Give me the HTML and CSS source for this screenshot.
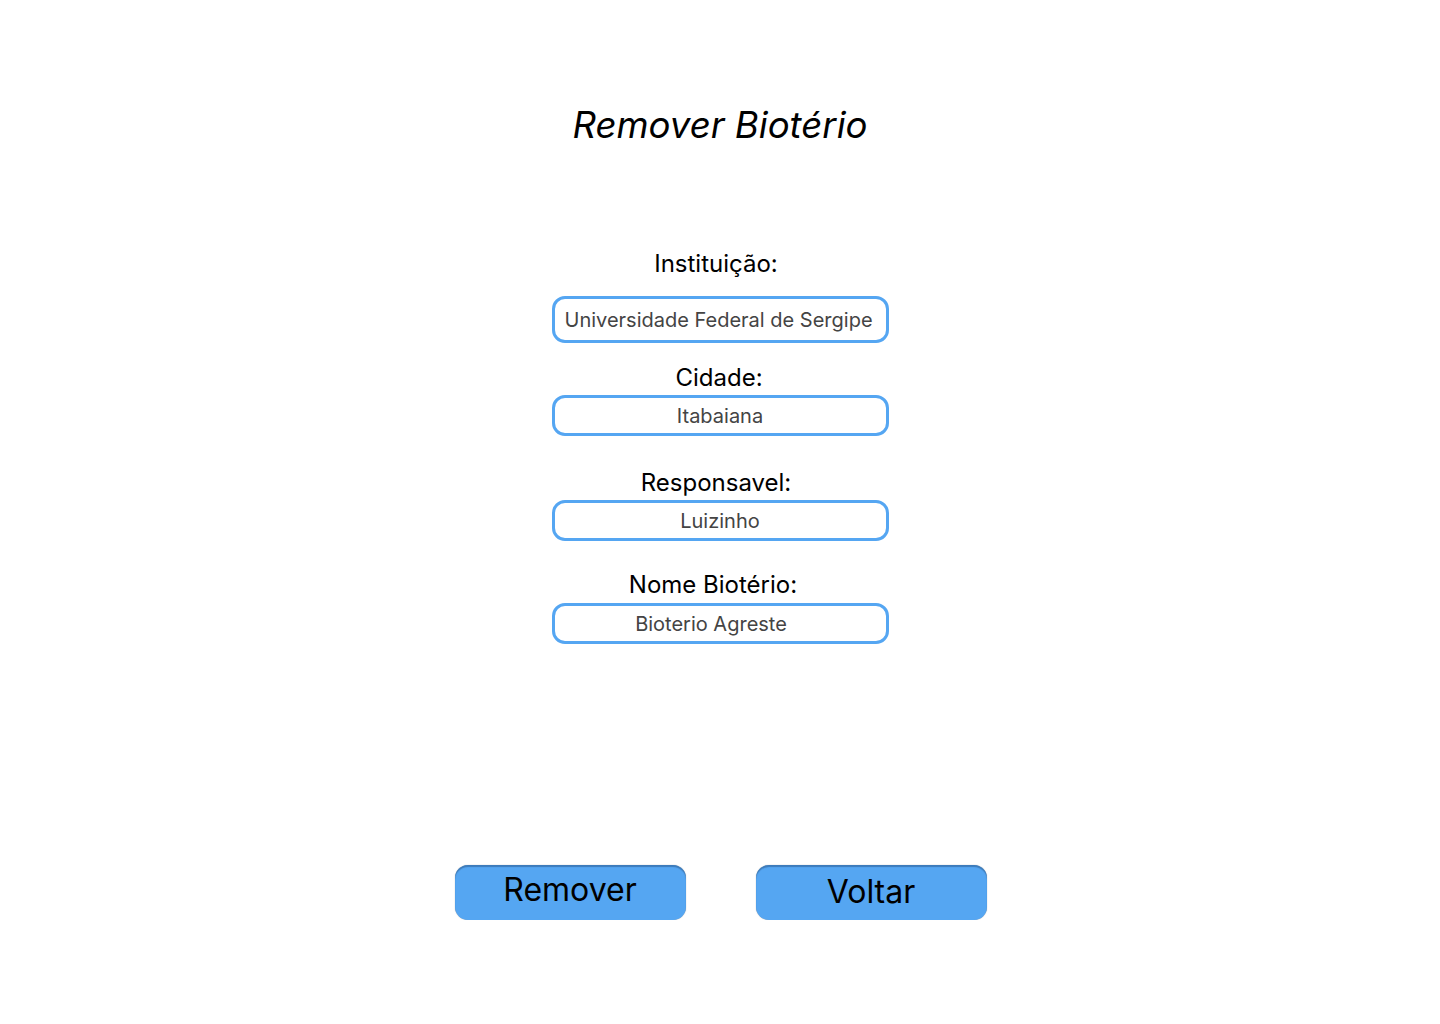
FILE: index.html
```html
<!DOCTYPE html>
<html lang="pt-BR">
<head>
  <meta charset="UTF-8">
  <title>Remover Biotério</title>
  <link rel="stylesheet" href="styles.css">
</head>
<body>

<div class="page">
  <h1 class="title">Remover Biotério</h1>

  <form class="form">
    <div class="field field-inst">
      <label for="inst">Instituição:</label>
      <input id="inst" class="tall left" type="text" value="Universidade Federal de Sergipe">
    </div>

    <div class="field field-cidade">
      <label for="cidade">Cidade:</label>
      <input id="cidade" type="text" value="Itabaiana">
    </div>

    <div class="field field-resp">
      <label for="resp">Responsavel:</label>
      <input id="resp" type="text" value="Luizinho">
    </div>

    <div class="field field-nome">
      <label for="nome">Nome Biotério:</label>
      <input id="nome" class="shift" type="text" value="Bioterio Agreste">
    </div>
  </form>

  <div class="actions">
    <button class="btn" type="button">Remover</button>
    <button class="btn btn-low" type="button">Voltar</button>
  </div>
</div>

</body>
</html>
```

FILE: styles.css
```css
body {
  margin: 0;
  font-family: Inter, "Noto Sans", sans-serif;
  background: #ffffff;
  color: #000;
}

.page {
  width: 1440px;
  padding-top: 103px;
  display: flex;
  flex-direction: column;
  align-items: center;
}

.title {
  margin: 0;
  font-size: 36.6px;
  line-height: 44px;
  font-style: italic;
  font-weight: 400;
}

.form {
  margin-top: 102px;
  display: flex;
  flex-direction: column;
  align-items: center;
}

.field {
  display: flex;
  flex-direction: column;
  align-items: center;
}

.field label {
  font-size: 24px;
  line-height: 29px;
  margin-bottom: 4px;
}

.field input {
  box-sizing: border-box;
  width: 337px;
  height: 41px;
  border: 3px solid #55a6f2;
  border-radius: 13px;
  background: #fff;
  font-family: Inter, "Noto Sans", sans-serif;
  font-size: 20px;
  color: #444;
  text-align: center;
  padding: 0 10px;
  outline: none;
}

.field input.tall {
  height: 47px;
}

.field input.left {
  text-align: left;
}

.field input.shift {
  padding-right: 28px;
}

.field-inst label {
  margin-bottom: 18px;
  margin-right: 8px;
}

.field-cidade {
  margin-top: 20px;
}

.field-cidade label {
  margin-left: -2px;
  margin-bottom: 3px;
}

.field-resp {
  margin-top: 32px;
}

.field-resp label {
  margin-bottom: 3px;
  margin-right: 8px;
}

.field-nome {
  margin-top: 29px;
}

.field-nome label {
  margin-right: 14px;
}

.actions {
  margin-top: 221px;
  display: flex;
  gap: 70px;
  margin-left: 1px;
}

.btn {
  width: 231px;
  height: 55px;
  border: none;
  border-radius: 13px;
  background: #55a6f2;
  box-shadow: inset 0 2px 1px rgba(30, 70, 120, 0.45), 0 0 1px rgba(0, 0, 0, 0.4);
  font-family: Inter, "Noto Sans", sans-serif;
  font-size: 32px;
  color: #000;
  padding: 0 0 6px;
  cursor: pointer;
}

.btn-low {
  padding: 0 0 2px;
}
```
